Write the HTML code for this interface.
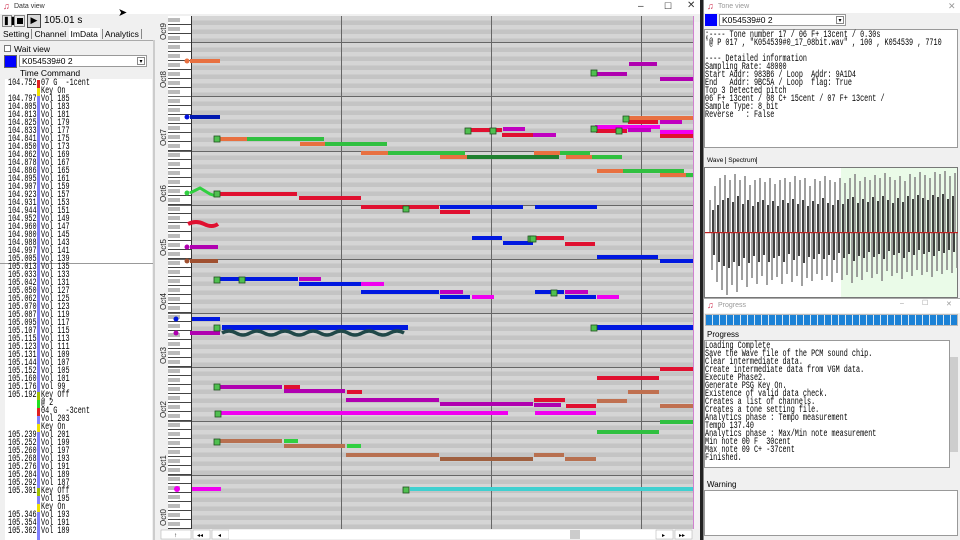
<!DOCTYPE html>
<html><head><meta charset="utf-8"><style>
*{margin:0;padding:0;box-sizing:border-box}
body{width:960px;height:540px;overflow:hidden;background:#f0f0f0;position:relative;font-family:"Liberation Sans",sans-serif;font-size:9px;color:#000}
.a{position:absolute}
.mono{font-family:"Liberation Mono",monospace;font-size:10px;line-height:8px;white-space:pre;transform:scaleX(.68);transform-origin:0 0}
.title{background:#fff;height:14px;font-size:7px;color:#333;padding:3px 0 0 14px}
.ic{position:absolute;left:3px;top:2px;color:#d03050;font-size:9px;line-height:9px}
</style></head><body>

<div class="a title" style="left:0;top:0;width:703px;height:15px">Data view<span class="ic">♫</span>
<span class="a" style="left:638px;top:1px;font-size:10px;color:#333">–</span>
<span class="a" style="left:664px;top:1px;font-size:9px;color:#333">☐</span>
<span class="a" style="left:687px;top:0px;font-size:10px;color:#333">✕</span></div>
<div class="a" style="left:0;top:14px;width:155px;height:526px;background:#f0f0f0"></div>
<div class="a" style="left:2px;top:15px;width:10px;height:12px;border:1px solid #888;background:#e8e8e8;font-size:8px;text-align:center;font-weight:bold">❚❚</div>
<div class="a" style="left:14px;top:15px;width:11px;height:12px;border:1px solid #888;background:#e8e8e8"><div class="a" style="left:2px;top:2px;width:6px;height:6px;background:#000"></div></div>
<div class="a" style="left:27px;top:14px;width:14px;height:14px;border:1px solid #444;background:#d8d8d8;font-size:9px;text-align:center">▶</div>
<div class="a" style="left:44px;top:15px;font-size:10px">105.01 s</div>
<div class="a" style="left:118px;top:6px;font-size:11px">➤</div>
<div class="a" style="left:3px;top:29px;font-size:8.5px;white-space:nowrap">Setting<span style="border-left:1px solid #888;margin:0 2px"></span>Channel <span style="background:#fff;padding:1px 2px">ImData</span><span style="border-left:1px solid #888;margin:0 2px"></span>Analytics<span style="border-left:1px solid #888;margin:0 2px"></span></div>
<div class="a" style="left:0;top:40px;width:153px;height:1px;background:#aaa"></div>
<div class="a" style="left:4px;top:45px;width:7px;height:7px;border:1px solid #777;background:#fff"></div>
<div class="a" style="left:14px;top:44px;font-size:8.5px">Wait view</div>
<div class="a" style="left:4px;top:55px;width:13px;height:13px;background:#0000ff;border:1px solid #666"></div>
<div class="a" style="left:19px;top:55px;width:128px;height:12px;background:#fff;border:1px solid #999;font-size:8.5px;padding-left:2px">K054539#0 2<span class="a" style="right:1px;top:1px;width:8px;height:8px;border:1px solid #888;font-size:6px;text-align:center;line-height:8px">▾</span></div>
<div class="a" style="left:20px;top:68px;font-size:8.5px">Time Command</div>
<div class="a" style="left:5px;top:79px;width:147px;height:461px;background:#fff"></div>
<div class="a" style="left:0;top:263px;width:153px;height:1px;background:#999"></div>
<div class="a" style="left:153px;top:40px;width:2px;height:500px;background:#ccc"></div>
<div class="a mono" style="left:8px;top:80px">104.752
        
104.797
104.805
104.813
104.825
104.833
104.841
104.850
104.862
104.878
104.886
104.895
104.907
104.923
104.931
104.944
104.952
104.960
104.980
104.988
104.997
105.005
105.013
105.033
105.042
105.050
105.062
105.070
105.087
105.095
105.107
105.115
105.123
105.131
105.144
105.152
105.160
105.176
105.192
 
 
 
 
105.239
105.252
105.260
105.268
105.276
105.284
105.292
105.301
 
 
105.346
105.354
105.362</div>
<div class="a mono" style="left:41px;top:80px">07 G  -1cent
Key On
Vol 185
Vol 183
Vol 181
Vol 179
Vol 177
Vol 175
Vol 173
Vol 169
Vol 167
Vol 165
Vol 161
Vol 159
Vol 157
Vol 153
Vol 151
Vol 149
Vol 147
Vol 145
Vol 143
Vol 141
Vol 139
Vol 135
Vol 133
Vol 131
Vol 127
Vol 125
Vol 123
Vol 119
Vol 117
Vol 115
Vol 113
Vol 111
Vol 109
Vol 107
Vol 105
Vol 101
Vol 99
Key Off
@ 2
04 G  -3cent
Vol 203
Key On
Vol 201
Vol 199
Vol 197
Vol 193
Vol 191
Vol 189
Vol 187
Key Off
Vol 195
Key On
Vol 193
Vol 191
Vol 189</div>
<svg class="a" style="left:37px;top:80px" width="4" height="460">
<rect x="0" y="0" width="3" height="8" fill="#e02020"/><rect x="0" y="8" width="3" height="8" fill="#f0e000"/>
<rect x="0" y="16" width="3" height="296" fill="#8080ff"/>
<rect x="0" y="312" width="3" height="8" fill="#a0c000"/><rect x="0" y="320" width="3" height="8" fill="#20e020"/><rect x="0" y="328" width="3" height="8" fill="#e02020"/><rect x="0" y="336" width="3" height="8" fill="#8080ff"/><rect x="0" y="344" width="3" height="8" fill="#f0e000"/>
<rect x="0" y="352" width="3" height="56" fill="#8080ff"/><rect x="0" y="408" width="3" height="8" fill="#a0c000"/><rect x="0" y="416" width="3" height="8" fill="#8080ff"/><rect x="0" y="424" width="3" height="8" fill="#f0e000"/><rect x="0" y="432" width="3" height="28" fill="#8080ff"/>
</svg>

<svg class="a" style="left:155px;top:14px" width="548" height="526" viewBox="155 14 548 526">
<defs>
<pattern id="st" x="0" y="16" width="10" height="9" patternUnits="userSpaceOnUse"><rect width="10" height="4.5" fill="#d5d5d5"/><rect y="4.5" width="10" height="4.5" fill="#c4c4c4"/></pattern>
<pattern id="kb" x="0" y="16" width="24" height="9" patternUnits="userSpaceOnUse"><rect width="24" height="9" fill="#fff"/><rect x="0" y="2" width="12" height="4" fill="#bbb"/><rect x="0" y="8" width="24" height="1" fill="#444"/></pattern>
</defs>
<rect x="155" y="14" width="548" height="526" fill="#f0f0f0"/>
<rect x="168" y="16" width="24" height="513" fill="url(#kb)"/>
<rect x="192" y="16" width="501" height="513" fill="url(#st)"/>
<g fill="#666">
<rect x="168" y="42" width="525" height="1"/><rect x="168" y="96" width="525" height="1"/><rect x="168" y="151" width="525" height="1"/><rect x="168" y="205" width="525" height="1"/><rect x="168" y="259" width="525" height="1"/><rect x="168" y="313" width="525" height="1"/><rect x="168" y="367" width="525" height="1"/><rect x="168" y="421" width="525" height="1"/><rect x="168" y="475" width="525" height="1"/>
<rect x="191" y="16" width="1" height="513" fill="#333"/><rect x="341" y="16" width="1" height="513"/><rect x="491" y="16" width="1" height="513"/><rect x="641" y="16" width="1" height="513"/>
</g>
<rect x="693" y="16" width="7" height="513" fill="#f4f0f4"/>
<rect x="693" y="16" width="1" height="513" fill="#d080d0"/>
<g font-size="8" fill="#222" font-family="Liberation Sans">
<text transform="translate(166,40) rotate(-90)">Oct9</text><text transform="translate(166,88) rotate(-90)">Oct8</text><text transform="translate(166,146) rotate(-90)">Oct7</text><text transform="translate(166,202) rotate(-90)">Oct6</text><text transform="translate(166,256) rotate(-90)">Oct5</text><text transform="translate(166,310) rotate(-90)">Oct4</text><text transform="translate(166,364) rotate(-90)">Oct3</text><text transform="translate(166,418) rotate(-90)">Oct2</text><text transform="translate(166,472) rotate(-90)">Oct1</text><text transform="translate(166,526) rotate(-90)">Oct0</text>
</g>
<g stroke="none">
<circle cx="187" cy="61" r="2.5" fill="#e87040"/><rect x="190" y="59" width="30" height="4" fill="#e87040"/>
<rect x="597" y="72" width="30" height="4" fill="#b000b0"/><rect x="629" y="62" width="28" height="4" fill="#b000b0"/><rect x="660" y="77" width="33" height="4" fill="#b000b0"/>
<circle cx="187" cy="117" r="2.5" fill="#0010e0"/><rect x="190" y="115" width="30" height="4" fill="#0018b0"/>
<rect x="628" y="116" width="65" height="4" fill="#e87040"/><rect x="628" y="120" width="30" height="4" fill="#e01030"/><rect x="660" y="120" width="22" height="4" fill="#c000c0"/>
<rect x="595" y="125" width="65" height="4" fill="#f000f0"/><rect x="596" y="129" width="31" height="4" fill="#e01030"/><rect x="628" y="128" width="23" height="4" fill="#c000c0"/><rect x="660" y="130" width="33" height="4" fill="#f000f0"/><rect x="660" y="134" width="33" height="4" fill="#e01030"/>
<rect x="470" y="128" width="32" height="4" fill="#e01030"/><rect x="503" y="127" width="22" height="4" fill="#c000c0"/><rect x="502" y="133" width="31" height="4" fill="#e01030"/><rect x="533" y="133" width="23" height="4" fill="#c000c0"/>
<rect x="220" y="137" width="27" height="4" fill="#e87040"/><rect x="247" y="137" width="77" height="4" fill="#30c040"/>
<rect x="300" y="142" width="25" height="4" fill="#e87040"/><rect x="325" y="142" width="62" height="4" fill="#30c040"/>
<rect x="361" y="151" width="27" height="4" fill="#e87040"/><rect x="388" y="151" width="77" height="4" fill="#30c040"/>
<rect x="440" y="155" width="27" height="4" fill="#e87040"/><rect x="467" y="155" width="92" height="4" fill="#208030"/>
<rect x="534" y="151" width="26" height="4" fill="#e87040"/><rect x="560" y="151" width="30" height="4" fill="#30c040"/>
<rect x="566" y="155" width="26" height="4" fill="#e87040"/><rect x="592" y="155" width="30" height="4" fill="#30c040"/>
<rect x="597" y="169" width="26" height="4" fill="#e87040"/><rect x="623" y="169" width="61" height="4" fill="#30c040"/>
<rect x="660" y="173" width="26" height="4" fill="#e87040"/><rect x="686" y="173" width="7" height="4" fill="#30c040"/>
<circle cx="187" cy="193" r="2.5" fill="#30d040"/><path d="M190 193 L200 188 L210 194 L216 196" stroke="#30d040" stroke-width="3" fill="none"/>
<rect x="218" y="192" width="79" height="4" fill="#e01030"/><rect x="299" y="196" width="62" height="4" fill="#e01030"/>
<rect x="361" y="205" width="78" height="4" fill="#e01030"/><rect x="440" y="205" width="83" height="4" fill="#0018e0"/><rect x="440" y="210" width="30" height="4" fill="#e01030"/><rect x="535" y="205" width="62" height="4" fill="#0018e0"/>
<path d="M188 224 Q196 220 204 224 T218 224" stroke="#e01030" stroke-width="4" fill="none"/>
<rect x="472" y="236" width="30" height="4" fill="#0018e0"/><rect x="503" y="241" width="30" height="4" fill="#0018e0"/><rect x="534" y="236" width="30" height="4" fill="#e01030"/><rect x="565" y="242" width="30" height="4" fill="#e01030"/>
<circle cx="187" cy="247" r="2.5" fill="#b000b0"/><rect x="190" y="245" width="28" height="4" fill="#b000b0"/>
<circle cx="187" cy="261" r="2.5" fill="#a05030"/><rect x="190" y="259" width="28" height="4" fill="#a05030"/>
<rect x="597" y="255" width="61" height="4" fill="#0018e0"/><rect x="660" y="259" width="33" height="4" fill="#0018e0"/>
<rect x="219" y="277" width="79" height="4" fill="#0018e0"/><rect x="299" y="277" width="22" height="4" fill="#c000c0"/><rect x="299" y="282" width="62" height="4" fill="#0018e0"/><rect x="361" y="282" width="23" height="4" fill="#f000f0"/>
<rect x="361" y="290" width="78" height="4" fill="#0018e0"/><rect x="440" y="290" width="23" height="4" fill="#c000c0"/><rect x="440" y="295" width="30" height="4" fill="#0018e0"/><rect x="472" y="295" width="22" height="4" fill="#f000f0"/>
<rect x="535" y="290" width="29" height="4" fill="#0018e0"/><rect x="565" y="290" width="23" height="4" fill="#c000c0"/><rect x="565" y="295" width="31" height="4" fill="#0018e0"/><rect x="597" y="295" width="22" height="4" fill="#f000f0"/>
<circle cx="176" cy="319" r="2.5" fill="#0018e0"/><rect x="192" y="317" width="28" height="4" fill="#0018e0"/>
<rect x="222" y="325" width="186" height="5" fill="#0018e0"/><path d="M222 333 Q229 329 236 333 T250 333 T264 333 T278 333 T292 333 T306 333 T320 333 T334 333 T348 333 T362 333 T376 333 T390 333 T404 333" stroke="#204848" stroke-width="3.5" fill="none"/>
<circle cx="176" cy="333" r="2.5" fill="#b000b0"/><rect x="190" y="331" width="30" height="4" fill="#b000b0"/>
<rect x="597" y="325" width="96" height="5" fill="#0018e0"/>
<rect x="660" y="367" width="33" height="4" fill="#e01030"/><rect x="597" y="376" width="62" height="4" fill="#e01030"/>
<rect x="220" y="385" width="62" height="4" fill="#b000b0"/><rect x="284" y="385" width="16" height="4" fill="#e01030"/><rect x="284" y="389" width="61" height="4" fill="#b000b0"/><rect x="347" y="390" width="15" height="4" fill="#e01030"/>
<rect x="346" y="398" width="93" height="4" fill="#b000b0"/><rect x="440" y="402" width="93" height="4" fill="#b000b0"/><rect x="534" y="398" width="31" height="4" fill="#e01030"/><rect x="534" y="403" width="27" height="4" fill="#b000b0"/><rect x="566" y="404" width="30" height="4" fill="#e01030"/>
<rect x="597" y="399" width="30" height="4" fill="#c07050"/><rect x="628" y="390" width="31" height="4" fill="#c07050"/><rect x="660" y="404" width="33" height="4" fill="#c07050"/>
<rect x="221" y="411" width="287" height="4" fill="#f000f0"/><rect x="535" y="411" width="61" height="4" fill="#f000f0"/>
<rect x="660" y="420" width="33" height="4" fill="#30c040"/><rect x="597" y="430" width="62" height="4" fill="#30c040"/>
<rect x="220" y="439" width="62" height="4" fill="#b87050"/><rect x="284" y="439" width="14" height="4" fill="#30d040"/><rect x="284" y="444" width="61" height="4" fill="#b87050"/><rect x="347" y="444" width="14" height="4" fill="#30d040"/>
<rect x="346" y="453" width="93" height="4" fill="#b87050"/><rect x="440" y="457" width="93" height="4" fill="#a06040"/><rect x="534" y="453" width="30" height="4" fill="#b87050"/><rect x="565" y="457" width="31" height="4" fill="#b87050"/>
<circle cx="177" cy="489" r="3" fill="#f000f0"/><rect x="192" y="487" width="29" height="4" fill="#f000f0"/>
<rect x="410" y="487" width="283" height="4" fill="#40d0d0"/>
</g>
<g fill="#50c050" stroke="#205020" stroke-width="0.8">
<rect x="214" y="191" width="6" height="6"/><rect x="214" y="136" width="6" height="6"/><rect x="465" y="128" width="6" height="6"/><rect x="490" y="128" width="6" height="6"/><rect x="591" y="70" width="6" height="6"/><rect x="591" y="126" width="6" height="6"/><rect x="616" y="128" width="6" height="6"/><rect x="623" y="116" width="6" height="6"/><rect x="403" y="206" width="6" height="6"/><rect x="528" y="236" width="6" height="6"/><rect x="214" y="277" width="6" height="6"/><rect x="239" y="277" width="6" height="6"/><rect x="551" y="290" width="6" height="6"/><rect x="214" y="325" width="6" height="6"/><rect x="591" y="325" width="6" height="6"/><rect x="214" y="384" width="6" height="6"/><rect x="215" y="411" width="6" height="6"/><rect x="214" y="439" width="6" height="6"/><rect x="403" y="487" width="6" height="6"/><rect x="530" y="236" width="6" height="6"/>
</g>
<rect x="155" y="529" width="548" height="11" fill="#f0f0f0"/>
<rect x="161" y="530" width="30" height="9" fill="#fff" stroke="#aaa" stroke-width="0.5"/><rect x="193" y="530" width="17" height="9" fill="#fff" stroke="#aaa" stroke-width="0.5"/><rect x="212" y="530" width="17" height="9" fill="#fff" stroke="#aaa" stroke-width="0.5"/>
<rect x="229" y="530" width="441" height="9" fill="#fff"/><rect x="570" y="530" width="10" height="9" fill="#ccc"/>
<rect x="656" y="530" width="17" height="9" fill="#fff" stroke="#aaa" stroke-width="0.5"/><rect x="675" y="530" width="17" height="9" fill="#fff" stroke="#aaa" stroke-width="0.5"/>
<g font-size="6" fill="#000"><text x="174" y="537">↑</text><text x="197" y="537">◂◂</text><text x="218" y="537">◂</text><text x="662" y="537">▸</text><text x="679" y="537">▸▸</text></g>
<rect x="694" y="16" width="6" height="6" fill="#eee"/>
</svg>
<div class="a" style="left:700px;top:0;width:3px;height:540px;background:#222"></div>

<div class="a" style="left:703px;top:0;width:257px;height:298px;background:#f0f0f0;border-left:1px solid #888"></div>
<div class="a title" style="left:704px;top:0;width:256px;height:13px;color:#999">Tone view<span class="ic">♫</span><span class="a" style="left:244px;top:1px;color:#999;font-size:9px">✕</span></div>
<div class="a" style="left:705px;top:14px;width:12px;height:12px;background:#0000ff"></div>
<div class="a" style="left:719px;top:14px;width:127px;height:12px;background:#fff;border:1px solid #999;font-size:8.5px;padding-left:2px">K054539#0 2<span class="a" style="right:1px;top:1px;width:8px;height:8px;border:1px solid #888;font-size:6px;text-align:center;line-height:8px">▾</span></div>
<div class="a" style="left:704px;top:29px;width:254px;height:119px;background:#fff;border:1px solid #999"></div>
<div class="a mono" style="left:705px;top:32px">;---- Tone number 17 / 06 F+ 13cent / 0.30s
'@ P 017 , "K054539#0_17_08bit.wav" , 100 , K054539 , 7710

---- Detailed information
Sampling Rate: 48000
Start Addr: 983B6 / Loop  Addr: 9A1D4
End   Addr: 9BC5A / Loop  flag: True
Top 3 Detected pitch
06 F+ 13cent / 08 C+ 15cent / 07 F+ 13cent /
Sample Type: 8 bit
Reverse   : False</div>
<div class="a" style="left:707px;top:157px;font-size:6.5px">Wave <span style="border-left:1px solid #666;padding-left:2px">Spectrum</span> <span style="border-left:1px solid #666"></span></div>
<div class="a" style="left:704px;top:167px;width:254px;height:131px;background:#fff;border:1px solid #777"></div>
<div class="a" style="left:841px;top:168px;width:116px;height:129px;background:#eafbe8"></div>
<svg class="a" style="left:704px;top:167px" width="256" height="131" viewBox="704 167 256 131">
<path stroke="#888" stroke-width="1.6" fill="none" d="M710 232V200 M715 232V186M720 232V178M725 232V175M730 232V180M735 232V174M740 232V180M745 232V176M750 232V185M755 232V180M760 232V178M765 232V182M770 232V178M775 232V184M780 232V180M785 232V178M790 232V182M795 232V176M800 232V180M805 232V178M810 232V186M815 232V179M820 232V181M825 232V176M830 232V180M835 232V182M840 232V178M845 232V183M850 232V178M855 232V174M860 232V181M865 232V177M870 232V180M875 232V175M880 232V178M885 232V173M890 232V177M895 232V180M900 232V176M905 232V181M910 232V174M915 232V177M920 232V172M925 232V175M930 232V178M935 232V172M940 232V174M945 232V171M950 232V176M955 232V173
M712 232V270M717 232V282M722 232V290M727 232V295M732 232V285M737 232V292M742 232V280M747 232V287M752 232V278M757 232V284M762 232V276M767 232V285M772 232V280M777 232V277M782 232V284M787 232V274M792 232V282M797 232V276M802 232V286M807 232V278M812 232V281M817 232V274M822 232V280M827 232V276M832 232V282M837 232V273M842 232V280M847 232V275M852 232V283M857 232V277M862 232V280M867 232V272M872 232V278M877 232V274M882 232V281M887 232V271M892 232V276M897 232V273M902 232V279M907 232V272M912 232V276M917 232V270M922 232V275M927 232V272M932 232V277M937 232V271M942 232V274M947 232V270M952 232V273M957 232V268"/>
<path stroke="#111" stroke-width="1.6" fill="none" d="M713 232V210M718 232V205M723 232V200M728 232V198M733 232V202M738 232V196M743 232V204M748 232V200M753 232V206M758 232V202M763 232V200M768 232V205M773 232V201M778 232V206M783 232V200M788 232V203M793 232V199M798 232V204M803 232V200M808 232V206M813 232V201M818 232V204M823 232V198M828 232V203M833 232V205M838 232V200M843 232V204M848 232V199M853 232V197M858 232V203M863 232V199M868 232V202M873 232V197M878 232V201M883 232V196M888 232V200M893 232V203M898 232V198M903 232V202M908 232V196M913 232V199M918 232V195M923 232V198M928 232V200M933 232V195M938 232V197M943 232V194M948 232V199M953 232V196
M714 232V255M719 232V262M724 232V266M729 232V268M734 232V262M739 232V266M744 232V258M749 232V263M754 232V256M759 232V262M764 232V255M769 232V262M774 232V258M779 232V256M784 232V262M789 232V254M794 232V260M799 232V256M804 232V263M809 232V257M814 232V259M819 232V254M824 232V259M829 232V255M834 232V260M839 232V253M844 232V258M849 232V254M854 232V261M859 232V256M864 232V258M869 232V252M874 232V257M879 232V254M884 232V259M889 232V251M894 232V255M899 232V253M904 232V258M909 232V252M914 232V255M919 232V250M924 232V254M929 232V252M934 232V256M939 232V251M944 232V253M949 232V250M954 232V252"/>
<rect x="705" y="232" width="253" height="1.2" fill="#c02020"/>
</svg>

<div class="a" style="left:703px;top:298px;width:257px;height:242px;background:#f0f0f0;border-left:1px solid #888;border-top:1px solid #aaa"></div>
<div class="a title" style="left:704px;top:299px;width:256px;height:14px;color:#999">Progress<span class="ic">♫</span><span class="a" style="left:196px;top:1px;color:#999">–</span><span class="a" style="left:218px;top:0px;color:#999">☐</span><span class="a" style="left:242px;top:1px;color:#999">✕</span></div>
<div class="a" style="left:705px;top:314px;width:253px;height:12px;background:repeating-linear-gradient(to right,#1c82d6 0 6px,#d8e8f4 6px 7px);border:1px solid #bbb"></div>
<div class="a" style="left:707px;top:330px;font-size:8px">Progress</div>
<div class="a" style="left:704px;top:340px;width:246px;height:128px;background:#fff;border:1px solid #999"></div>
<div class="a" style="left:950px;top:340px;width:8px;height:128px;background:#f0f0f0"><div class="a" style="left:0;top:17px;width:8px;height:95px;background:#cdcdcd"></div></div>
<div class="a mono" style="left:705px;top:343px">Loading Complete
Save the Wave file of the PCM sound chip.
Clear intermediate data.
Create intermediate data from VGM data.
Execute Phase2.
Generate PSG Key On.
Existence of valid data check.
Creates a list of channels.
Creates a tone setting file.
Analytics phase : Tempo measurement
Tempo 137.40
Analytics phase : Max/Min note measurement
Min note 00 F  30cent
Max note 09 C+ -37cent
Finished.</div>
<div class="a" style="left:707px;top:480px;font-size:8px">Warning</div>
<div class="a" style="left:704px;top:490px;width:254px;height:46px;background:#fff;border:1px solid #999"></div>
</body></html>
